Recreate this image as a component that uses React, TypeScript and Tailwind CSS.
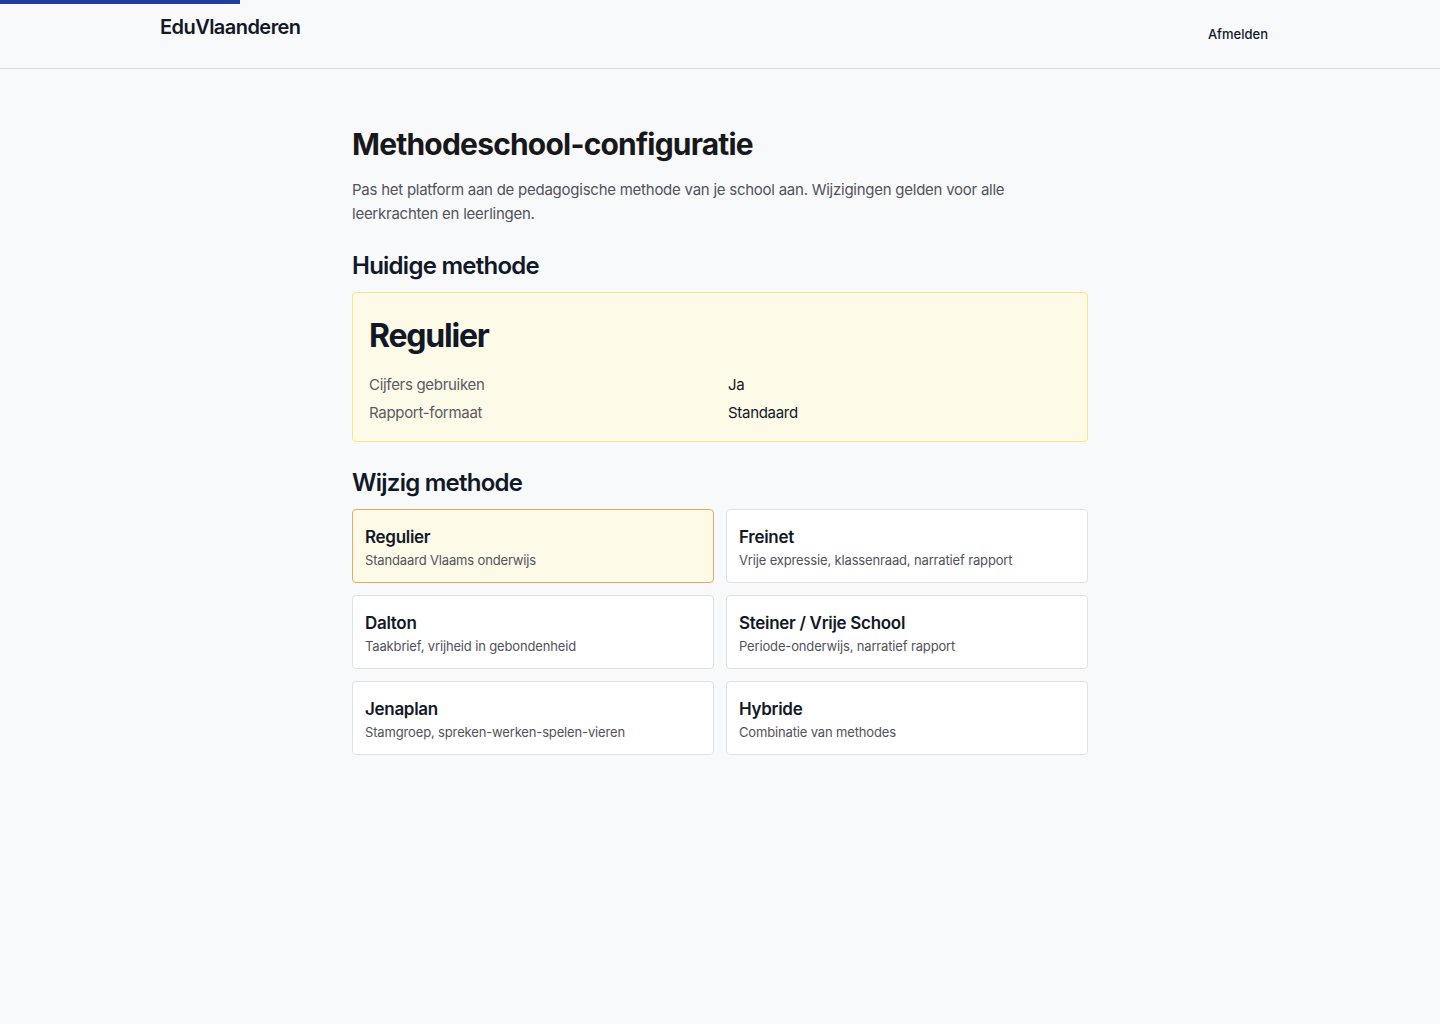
import { useState } from "react";

const methods = [
  { id: "regulier", name: "Regulier", desc: "Standaard Vlaams onderwijs" },
  { id: "freinet", name: "Freinet", desc: "Vrije expressie, klassenraad, narratief rapport" },
  { id: "dalton", name: "Dalton", desc: "Taakbrief, vrijheid in gebondenheid" },
  { id: "steiner", name: "Steiner / Vrije School", desc: "Periode-onderwijs, narratief rapport" },
  { id: "jenaplan", name: "Jenaplan", desc: "Stamgroep, spreken-werken-spelen-vieren" },
  { id: "hybride", name: "Hybride", desc: "Combinatie van methodes" },
];

export default function App() {
  const [selected, setSelected] = useState("regulier");

  return (
    <div className="min-h-screen bg-[#f8f9fb] font-['Inter',sans-serif] text-[#111827]">
      {/* Header */}
      <header className="relative h-[69px] border-b border-[#dcdfe5] bg-[#f8f9fb]">
        <div className="absolute left-0 top-0 h-[4px] w-[240px] bg-[#1e3fa0]" />
        <div className="mx-auto flex h-full max-w-[1120px] items-start justify-between">
          <span className="mt-[15px] text-[20px] font-semibold leading-6 tracking-[-0.55px] text-[#111827]">
            EduVlaanderen
          </span>
          <button className="mt-[25px] mr-[12px] text-[13px] font-medium leading-[18px] text-[#111827]">
            Afmelden
          </button>
        </div>
      </header>

      <main className="mx-auto max-w-3xl px-4 pt-[57px] pb-16">
        <h1 className="text-[30px] font-bold leading-9 tracking-[-0.8px] text-[#18181b]">
          Methodeschool-configuratie
        </h1>
        <p className="mt-[16px] max-w-2xl text-[15px] leading-6 tracking-[-0.25px] text-[#52525b]">
          Pas het platform aan de pedagogische methode van je school aan. Wijzigingen gelden voor
          alle leerkrachten en leerlingen.
        </p>

        <h2 className="mt-[24px] text-[24px] font-semibold leading-8 tracking-[-0.75px]">
          Huidige methode
        </h2>
        <section className="mt-[10px] rounded border border-[#fbe58a] bg-[#fefae8] px-4 pt-[23px] pb-4">
          <h3 className="text-[32px] font-bold leading-10 tracking-[-1.2px]">Regulier</h3>
          <dl className="mt-[17px] grid grid-cols-2 gap-x-4 gap-y-1 text-[15px] leading-6 tracking-[-0.3px]">
            <dt className="text-[#5b5b63]">Cijfers gebruiken</dt>
            <dd className="text-[#111827]">Ja</dd>
            <dt className="text-[#5b5b63]">Rapport-formaat</dt>
            <dd className="text-[#111827]">Standaard</dd>
          </dl>
        </section>

        <h2 className="mt-[25px] text-[24px] font-semibold leading-8 tracking-[-0.75px]">
          Wijzig methode
        </h2>
        <div className="mt-[10px] grid grid-cols-2 gap-3">
          {methods.map((m) => {
            const active = m.id === selected;
            return (
              <button
                key={m.id}
                onClick={() => setSelected(m.id)}
                className={
                  active
                    ? "flex h-[74px] flex-col justify-start rounded border border-[#e9a95f] bg-[#fefae8] px-3 pt-[13px] text-left"
                    : "flex h-[74px] flex-col justify-start rounded border border-[#dfe1e5] bg-white px-3 pt-[13px] text-left"
                }
              >
                <div className="text-[17px] font-semibold leading-7 tracking-[-0.3px] text-[#111827]">
                  {m.name}
                </div>
                <div className="text-[13px] leading-[18px] tracking-[-0.15px] text-[#52525b]">
                  {m.desc}
                </div>
              </button>
            );
          })}
        </div>
      </main>
    </div>
  );
}
